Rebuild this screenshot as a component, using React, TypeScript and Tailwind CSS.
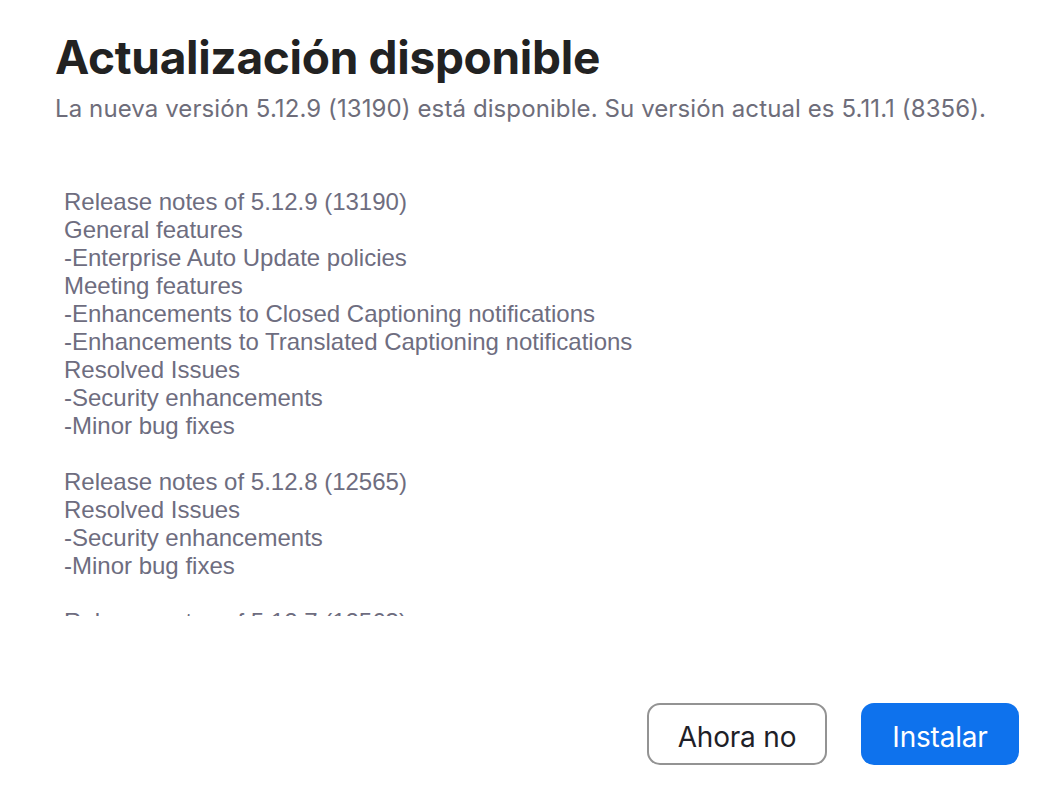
import React from "react";

const notes: string[] = [
  "Release notes of 5.12.9 (13190)",
  "General features",
  "-Enterprise Auto Update policies",
  "Meeting features",
  "-Enhancements to Closed Captioning notifications",
  "-Enhancements to Translated Captioning notifications",
  "Resolved Issues",
  "-Security enhancements",
  "-Minor bug fixes",
  "",
  "Release notes of 5.12.8 (12565)",
  "Resolved Issues",
  "-Security enhancements",
  "-Minor bug fixes",
  "",
  "Release notes of 5.12.7 (12563)",
];

export default function App() {
  return (
    <div
      className="w-[1060px] h-[796px] bg-white flex flex-col overflow-hidden"
      style={{ fontFamily: "Inter, 'Noto Sans', sans-serif" }}
    >
      <div className="pl-[55px] pt-[34px]">
        <h1 className="text-[46px] leading-[46px] font-bold text-[#222222] tracking-[-0.3px]">
          Actualización disponible
        </h1>
        <p className="mt-[14px] text-[24px] leading-[30px] text-[#6e6d7a] tracking-[0.1px]">
          La nueva versión 5.12.9 (13190) está disponible. Su versión actual es 5.11.1 (8356).
        </p>
      </div>
      <div
        className="ml-[64px] mt-[64px] h-[428px] overflow-hidden text-[24px] leading-[28px] text-[#6e6d7f]"
        style={{ fontFamily: "'Liberation Sans', Arial, sans-serif" }}
      >
        {notes.map((n, i) => (
          <div key={i} className="h-[28px] whitespace-pre">
            {n}
          </div>
        ))}
      </div>
      <div className="flex justify-end gap-[34px] pr-[41px] mt-[87px]">
        <button className="w-[180px] h-[62px] rounded-[13px] border-2 border-[#939393] bg-white pt-[5px] text-[28px] tracking-[-0.2px] text-[#1f1f28]">
          Ahora no
        </button>
        <button className="w-[158px] h-[62px] rounded-[13px] bg-[#0e72ed] pt-[5px] text-[28px] tracking-[-0.2px] text-white">
          Instalar
        </button>
      </div>
    </div>
  );
}
